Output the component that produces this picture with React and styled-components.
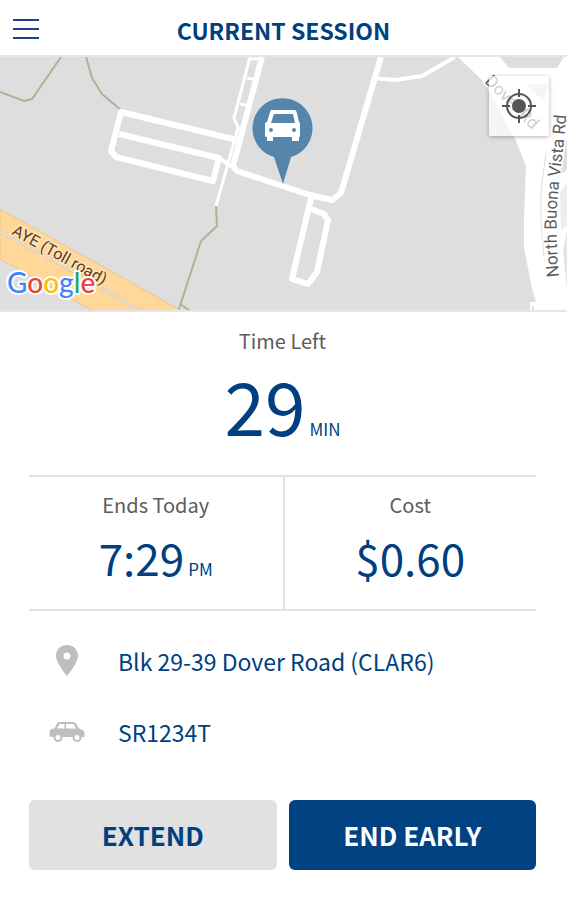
import React from 'react'
import styled, { createGlobalStyle } from 'styled-components'

const GlobalStyle = createGlobalStyle`
	* {
		box-sizing: border-box;
	}
	body {
		margin: 0;
		background: #fff;
		color: #003f80;
		font-family: "Noto Sans CJK SC", "Noto Sans", sans-serif;
	}
`;

const Header = styled.header`
	display: grid;
	grid-template-columns: 52px 1fr 52px;
	align-items: center;
	height: 57px;
	padding-top: 4px;
	border-bottom: 2px solid #e6e6e6;
`;

const MenuButton = styled.button`
	display: flex;
	flex-direction: column;
	gap: 7px;
	width: 26px;
	margin: 0 0 2px 13px;
	padding: 0;
	border: 0;
	background: none;
	cursor: pointer;
`;

const MenuLine = styled.span`
	width: 100%;
	height: 2px;
	background: #1b4282;
`;

const Title = styled.h1`
	margin: 0;
	font-size: 23px;
	line-height: 32px;
	font-weight: 700;
	text-align: center;
`;

const MapArea = styled.section`
	position: relative;
	height: 255px;
	border-bottom: 2px solid #e6e6e6;
	background: #dedede;
`;

const MapDrawing = styled.svg`
	display: block;
	width: 100%;
	height: 100%;
`;

const LocateButton = styled.button`
	position: absolute;
	top: 19px;
	right: 18px;
	display: flex;
	align-items: center;
	justify-content: center;
	width: 60px;
	height: 60px;
	padding: 0;
	border: 0;
	border-radius: 2px;
	background: rgba(255, 255, 255, 0.7);
	box-shadow: 0 1px 4px rgba(0, 0, 0, 0.3);
	cursor: pointer;
`;

const Content = styled.main`
	padding: 13px 31px 30px 29px;
`;

const Metric = styled.div`
	display: flex;
	flex-direction: column;
	align-items: center;
`;

const Label = styled.h2`
	margin: 0;
	color: #5c5c5c;
	font-size: 20px;
	line-height: 32px;
	font-weight: 400;
`;

const Value = styled.p`
	display: flex;
	align-items: baseline;
	gap: 4px;
	margin: 0;
	font-size: ${props => props.$large ? '73px' : '44px'};
	line-height: ${props => props.$large ? '94px' : '72px'};
`;

const Unit = styled.span`
	font-size: 17px;
	line-height: 24px;
`;

const Summary = styled.section`
	display: grid;
	grid-template-columns: 1fr 1fr;
	margin-top: 24px;
	border-top: 2px solid #e2e2e2;
	border-bottom: 2px solid #e2e2e2;
`;

const SummaryCell = styled(Metric)`
	padding: 12px 0 16px;
	& + & {
		border-left: 2px solid #e2e2e2;
	}
`;

const Details = styled.ul`
	margin: 0;
	padding: 14px 0 33px;
	list-style: none;
`;

const DetailRow = styled.li`
	display: grid;
	grid-template-columns: 76px 1fr;
	align-items: center;
	column-gap: 13px;
	height: 71px;
	font-size: 23px;
	line-height: 32px;
`;

const DetailIcon = styled.svg`
	justify-self: center;
	fill: #bdbfbf;
`;

const Actions = styled.div`
	display: grid;
	grid-template-columns: 1fr 1fr;
	gap: 12px;
`;

const ActionButton = styled.button`
	height: 70px;
	padding: 0;
	border: 0;
	border-radius: 6px;
	background: ${props => props.$primary ? '#004282' : '#e1e1e1'};
	color: ${props => props.$primary ? '#fff' : '#003f80'};
	font-family: inherit;
	font-size: 26px;
	line-height: 32px;
	font-weight: 700;
	cursor: pointer;
`;

const Footpath = styled.path`
	fill: none;
	stroke: #b3b195;
	stroke-width: 2;
`;

const Road = styled.path`
	fill: none;
	stroke: #fff;
	stroke-width: ${props => props.$width || 6};
	stroke-linejoin: round;
`;

const RoadName = styled.text`
	fill: ${props => props.$highway ? '#593a24' : '#5d5d5d'};
	stroke: ${props => props.$highway ? '#ffe4b5' : '#fff'};
	stroke-width: 3px;
	paint-order: stroke;
	font-family: Roboto, "Liberation Sans", sans-serif;
	font-size: ${props => props.$highway ? '16px' : '17px'};
`;

const Logo = styled.text`
	stroke: #fff;
	stroke-width: 4px;
	stroke-linejoin: round;
	paint-order: stroke;
	font-family: Lato, "Liberation Sans", sans-serif;
	font-size: 28px;
	font-weight: 500;
`;

const logoLetters = [
	['G', '#4285f4'],
	['o', '#ea4335'],
	['o', '#fbbc05'],
	['g', '#4285f4'],
	['l', '#34a853'],
	['e', '#ea4335'],
];

const StreetMap = () => (
	<MapDrawing viewBox="0 57 567 253" preserveAspectRatio="xMidYMid slice" role="img" aria-label="Map of the parking location">
		<rect y="57" width="567" height="254" fill="#dedede" />

		<path d="M0 209L182 311H93L0 259Z" fill="#ffd899" stroke="#e9c58f" />
		<path d="M0 232L62 265L141 311" fill="none" stroke="#d9bd92" strokeWidth="3" />
		<path d="M0 232L62 265L141 311" fill="none" stroke="#e3e0dc" strokeWidth="2" />

		<Footpath d="M0 92L24 101L32 99L61 57" />
		<Footpath d="M86 57L92 78L102 94L121 110" />
		<Footpath d="M216 206L217 226L201 241L179 309M180 304L190 311" />

		<Road d="M237 140L121 112L111 151L116 157L213 181L219 158L119 134" />
		<Road d="M219 158L234 168" $width={4} />
		<Road d="M262 57L233 166L237 171L310 195L332 200L341 193L381 57" />
		<Road d="M250 57L234 118L238 128L216 206M247 78L257 80M240 104L250 106M250 59H262M237 127L243 129" $width={3} />
		<Road d="M374 78L395 80L422 76L455 57" $width={4} />
		<Road d="M311 198L292 279L308 284L317 272L328 220L324 214L311 209" />

		<path
			d="M458 57L484 82L516 141L526 166L524 220V248L532 288L536 302H530V311H567V57Z"
			fill="#fff"
		/>
		<path d="M500 57L509 68H557L564 57Z" fill="#dedede" />
		<path d="M527 85L549 84L543 101Z" fill="#dedede" />
		<path d="M567 139L559 176L567 170Z" fill="#dedede" />
		<path d="M567 182L560 193L561 230L567 225Z" fill="#ededed" />
		<path d="M567 232L563 250L567 290Z" fill="#e4e4e4" />
		<path d="M546 153L541 190V225L544 256" fill="none" stroke="#dedede" />
		<path d="M533 306V311" fill="none" stroke="#dedede" strokeWidth="2" />

		<RoadName transform="translate(484 82) rotate(45)">Dover Rd</RoadName>
		<path id="vista-road" d="M559 277C555 238 556 205 560 175Q564 145 567 105" fill="none" />
		<RoadName $highway={false}>
			<textPath href="#vista-road">North Buona Vista Rd</textPath>
		</RoadName>
		<RoadName transform="translate(11 234) rotate(29)" $highway>AYE (Toll road)</RoadName>

		<Logo x="7" y="293">
			{logoLetters.map(([letter, color], i) => (
				<tspan key={i} fill={color}>{letter}</tspan>
			))}
		</Logo>

		<path d="M283 184L274 157A30 30 0 1 1 291 157Z" fill="#5585aa" />
		<path
			fillRule="evenodd"
			d="M271 110H295Q296 110 297 113L299 122L300 123V136Q300 137 299 137V141H292V137H273V141H267V137Q265 137 265 136V123L267 122L270 112ZM274 114L271 123H295L293 114ZM271 128A2 2 0 1 0 271 132A2 2 0 1 0 271 128ZM294 128A2 2 0 1 0 294 132A2 2 0 1 0 294 128Z"
			fill="#fff"
		/>
	</MapDrawing>
)

const App = () => {
	return (
		<>
			<GlobalStyle />
			<Header>
				<MenuButton type="button" aria-label="Menu">
					<MenuLine />
					<MenuLine />
					<MenuLine />
				</MenuButton>
				<Title>CURRENT SESSION</Title>
			</Header>
			<MapArea>
				<StreetMap />
				<LocateButton type="button" aria-label="Show my location">
					<svg width="34" height="34" viewBox="0 0 34 34" fill="none" stroke="#555" strokeWidth="2">
						<circle cx="17" cy="17" r="12" />
						<circle cx="17" cy="17" r="6" fill="#555" />
						<path d="M17 0V8M17 26V34M0 17H8M26 17H34" />
					</svg>
				</LocateButton>
			</MapArea>
			<Content>
				<Metric>
					<Label>Time Left</Label>
					<Value $large>29 <Unit>MIN</Unit></Value>
				</Metric>
				<Summary>
					<SummaryCell>
						<Label>Ends Today</Label>
						<Value>7:29 <Unit>PM</Unit></Value>
					</SummaryCell>
					<SummaryCell>
						<Label>Cost</Label>
						<Value>$0.60</Value>
					</SummaryCell>
				</Summary>
				<Details>
					<DetailRow>
						<DetailIcon width="22" height="31" viewBox="0 0 22 31" aria-hidden="true">
							<path fillRule="evenodd" d="M11 0C4.700 0 0 4.700 0 10.700C0 18 11 31 11 31S22 18 22 10.700C22 4.700 17.300 0 11 0ZM11 7.500A3.500 3.500 0 1 1 11 14.500A3.500 3.500 0 1 1 11 7.500Z" />
						</DetailIcon>
						Blk 29-39 Dover Road (CLAR6)
					</DetailRow>
					<DetailRow>
						<DetailIcon width="36" height="20" viewBox="0 0 36 20" aria-hidden="true">
							<path fillRule="evenodd" d="M10 0H24Q26 0 27 1.500L30 6.500L34 8Q35.500 9 35.500 11V15H32Q31.500 11.500 28 11.500T24 15H13Q12.500 11.500 9 11.500T5 15H2Q0.500 15 0.500 13V10Q0.500 8 2.500 7L5.500 6.500L8 1.500Q9 0 10 0ZM10.500 2L8 6.500H15.500V2ZM17 2V6.500H27.500L24.500 2Z" />
							<path fillRule="evenodd" d="M9 11A4.500 4.500 0 1 1 9 20A4.500 4.500 0 1 1 9 11ZM9 13A2.500 2.500 0 1 0 9 18A2.500 2.500 0 1 0 9 13ZM28 11A4.500 4.500 0 1 1 28 20A4.500 4.500 0 1 1 28 11ZM28 13A2.500 2.500 0 1 0 28 18A2.500 2.500 0 1 0 28 13Z" />
						</DetailIcon>
						SR1234T
					</DetailRow>
				</Details>
				<Actions>
					<ActionButton type="button">EXTEND</ActionButton>
					<ActionButton type="button" $primary>END EARLY</ActionButton>
				</Actions>
			</Content>
		</>
	)
};

export default App
